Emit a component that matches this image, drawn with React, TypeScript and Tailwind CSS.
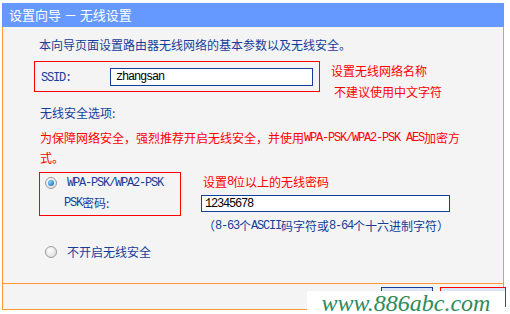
import React from "react";

const cn = "font-['Noto_Sans_CJK_SC',sans-serif]";

function M({ children }: { children: React.ReactNode }) {
  // half-width latin, like the router's bitmap font
  return <span className="font-['Liberation_Mono',monospace] text-[12px] leading-[12px] tracking-[-1.2px]">{children}</span>;
}

function Radio({ on }: { on?: boolean }) {
  return (
    <span className="flex h-[12px] w-[12px] items-center justify-center rounded-full border border-[#9a9a9a] bg-[radial-gradient(circle_at_40%_35%,#ffffff,#d6d6d6)]">
      {on && <span className="h-[6px] w-[6px] rounded-full bg-[radial-gradient(circle_at_35%_35%,#7fd0ff,#0a5fa8)]" />}
    </span>
  );
}

export default function App() {
  return (
    <div className={`relative h-[314px] w-[510px] bg-white pl-[2px] pt-[3px] text-[12px] leading-[12px] ${cn}`}>
      <div className="flex h-[24px] w-[502px] items-center bg-[#6699ff] pl-[7px] text-[13px] text-white">
        设置向导 － 无线设置
      </div>

      <div className="h-[257px] w-[502px] border-x border-b border-[#ff9933] bg-[#f4f4f4] pl-[31px] pt-[12px] text-[#153e9a]">
        <p className="flex h-[12px] items-center pl-[5px]">本向导页面设置路由器无线网络的基本参数以及无线安全。</p>

        <div className="mt-[10px] flex h-[31px]">
          <div className="flex h-[31px] w-[286px] items-center border border-[#ff0000] pl-[6px]">
            <span className="w-[69px]"><M>SSID:</M></span>
            <div className="flex h-[18px] w-[203px] items-center border border-[#153e9a] bg-white pl-[5px] text-black">
              <M>zhangsan</M>
            </div>
          </div>
          <div className="pl-[11px] pt-[4px] text-[#ff0000]">
            <p className="flex h-[12px] items-center">设置无线网络名称</p>
            <p className="mt-[9px] flex h-[12px] items-center pl-[3px]">不建议使用中文字符</p>
          </div>
        </div>

        <p className="mt-[15px] flex h-[12px] items-center pl-[6px]">无线安全选项:</p>
        <div className="mt-[9px] pl-[6px] text-[#ff0000]">
          <p className="flex h-[20px] items-center whitespace-pre">
            为保障网络安全，强烈推荐开启无线安全，并使用<M>WPA-PSK/WPA2-PSK AES</M>加密方
          </p>
          <p className="flex h-[20px] items-center">式。</p>
        </div>

        <div className="mt-[4px] flex">
          <div className="ml-[5px] h-[44px] w-[142px] border border-[#ff0000] pl-[5px] pt-[3px]">
            <div className="flex h-[14px] items-center gap-[10px]">
              <Radio on />
              <M>WPA-PSK/WPA2-PSK</M>
            </div>
            <div className="mt-[6px] flex h-[14px] items-center pl-[19px]">
              <M>PSK</M>密码:
            </div>
          </div>
          <div className="pl-[20px] pt-[4px]">
            <p className="flex h-[12px] items-center pl-[2px] text-[#ff0000]">设置<M>8</M>位以上的无线密码</p>
            <div className="mt-[7px] flex h-[17px] w-[249px] items-center border border-[#153e9a] bg-white pl-[3px] text-black">
              <M>12345678</M>
            </div>
            <p className="mt-[8px] flex h-[12px] items-center pl-[2px]">
              （<M>8-63</M>个<M>ASCII</M>码字符或<M>8-64</M>个十六进制字符）
            </p>
          </div>
        </div>

        <div className="mt-[13px] flex h-[14px] items-center gap-[10px] pl-[11px]">
          <Radio />
          <span>不开启无线安全</span>
        </div>
      </div>

      <div className="flex h-[26px] w-[502px] justify-end gap-[7px] border-x border-b border-[#ff9933] bg-[#f4f4f4] pt-[3px]">
        <button className="h-[20px] w-[52px] border border-[#153e9a] bg-[#dde4f6] text-[12px] text-black">上一步</button>
        <button className="-mr-[3px] h-[20px] w-[66px] border border-[#ff0000] bg-[#dde4f6] text-[12px] text-black">下一步</button>
      </div>

      <div className="absolute left-[307px] top-[291px] flex h-[23px] w-[198px] items-center justify-center bg-white font-['Liberation_Serif',serif] text-[24px] italic text-[#2e8b57]">
        www.886abc.com
      </div>
    </div>
  );
}
